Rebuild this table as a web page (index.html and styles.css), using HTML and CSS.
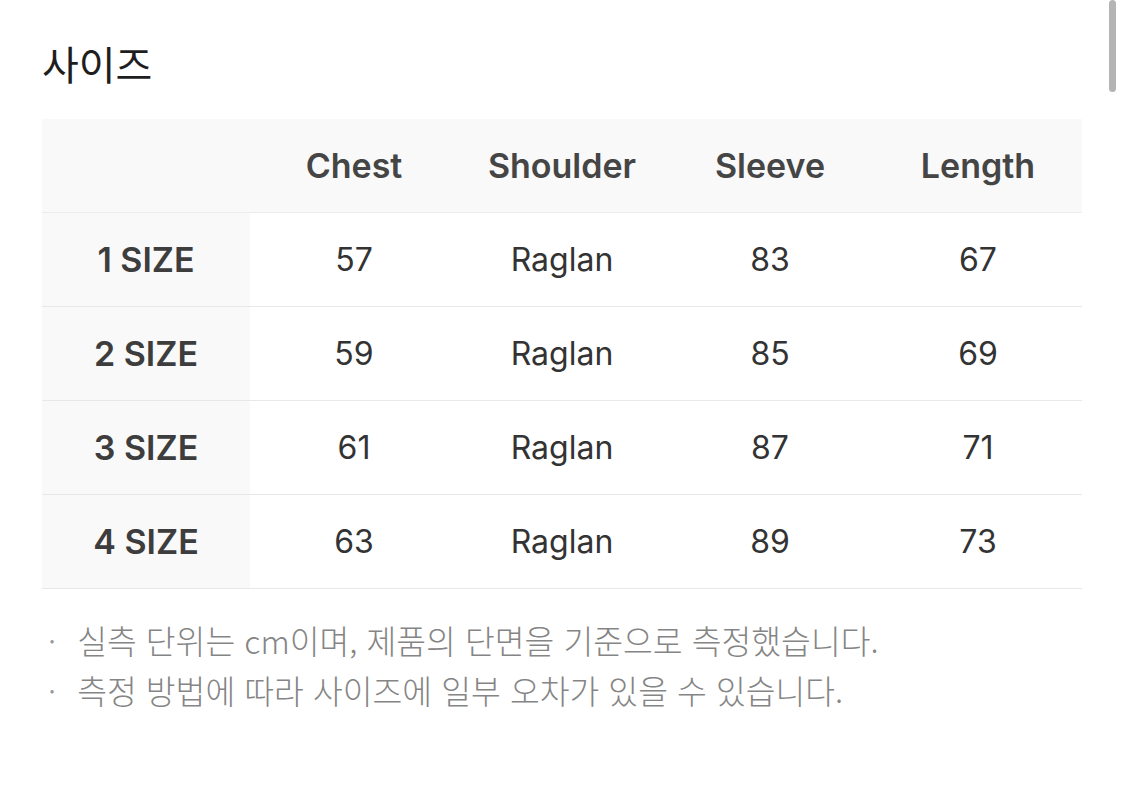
FILE: index.html
```html
<!DOCTYPE html>
<html lang="ko">
<head>
    <meta charset="UTF-8">
    <meta name="viewport" content="width=device-width, initial-scale=1.0">
    <title>사이즈</title>
    <link rel="stylesheet" href="styles.css">
</head>
<body>
    <div id="page">
        <h2 class="section-title">사이즈</h2>

        <table class="size-table">
            <thead>
                <tr>
                    <th class="label"></th>
                    <th>Chest</th>
                    <th>Shoulder</th>
                    <th>Sleeve</th>
                    <th>Length</th>
                </tr>
            </thead>
            <tbody>
                <tr>
                    <th class="label">1 SIZE</th>
                    <td>57</td>
                    <td>Raglan</td>
                    <td>83</td>
                    <td>67</td>
                </tr>
                <tr>
                    <th class="label">2 SIZE</th>
                    <td>59</td>
                    <td>Raglan</td>
                    <td>85</td>
                    <td>69</td>
                </tr>
                <tr>
                    <th class="label">3 SIZE</th>
                    <td>61</td>
                    <td>Raglan</td>
                    <td>87</td>
                    <td>71</td>
                </tr>
                <tr>
                    <th class="label">4 SIZE</th>
                    <td>63</td>
                    <td>Raglan</td>
                    <td>89</td>
                    <td>73</td>
                </tr>
            </tbody>
        </table>

        <ul class="notes">
            <li>실측 단위는 cm이며, 제품의 단면을 기준으로 측정했습니다.</li>
            <li>측정 방법에 따라 사이즈에 일부 오차가 있을 수 있습니다.</li>
        </ul>
    </div>

    <div class="scrollbar"></div>
</body>
</html>
```

FILE: styles.css
```css
body {
    margin: 0;
    padding: 0;
    background: #fff;
    color: #333;
    font-family: Inter, "Noto Sans CJK KR", sans-serif;
    overflow: hidden;
}

#page {
    padding: 34px 42px 0 42px;
    width: 1040px;
}

.section-title {
    margin: 0 0 27px 0;
    font-family: "Noto Sans CJK KR", sans-serif;
    font-size: 40px;
    line-height: 58px;
    font-weight: 400;
    color: #1e1e1e;
}

.size-table {
    width: 1040px;
    border-collapse: collapse;
    table-layout: fixed;
}

.size-table th,
.size-table td {
    width: 208px;
    height: 93px;
    padding: 0;
    text-align: center;
    vertical-align: middle;
    font-size: 32px;
}

.size-table thead th {
    background: #f9f9f9;
    color: #454545;
    font-size: 34px;
    font-weight: 600;
    border-bottom: 1px solid #ececec;
}

.size-table tbody th,
.size-table tbody td {
    border-bottom: 1px solid #e8e8e8;
}

.size-table tbody th.label {
    background: #f9f9f9;
    color: #3d3d3d;
    font-size: 34px;
    font-weight: 600;
}

.size-table td {
    color: #333;
    font-weight: 400;
}

.notes {
    list-style: none;
    margin: 26px 0 0 0;
    padding: 0;
    font-family: "Noto Sans CJK KR", sans-serif;
    font-size: 32.4px;
    line-height: 50px;
    font-weight: 300;
    color: #858585;
}

.notes li {
    display: flex;
    gap: 21px;
    padding-left: 6px;
}

.notes li::before {
    content: "·";
    color: #999;
}

.scrollbar {
    position: absolute;
    top: 0;
    right: 9px;
    width: 7px;
    height: 92px;
    border-radius: 4px;
    background: #b4b4b4;
}
```
